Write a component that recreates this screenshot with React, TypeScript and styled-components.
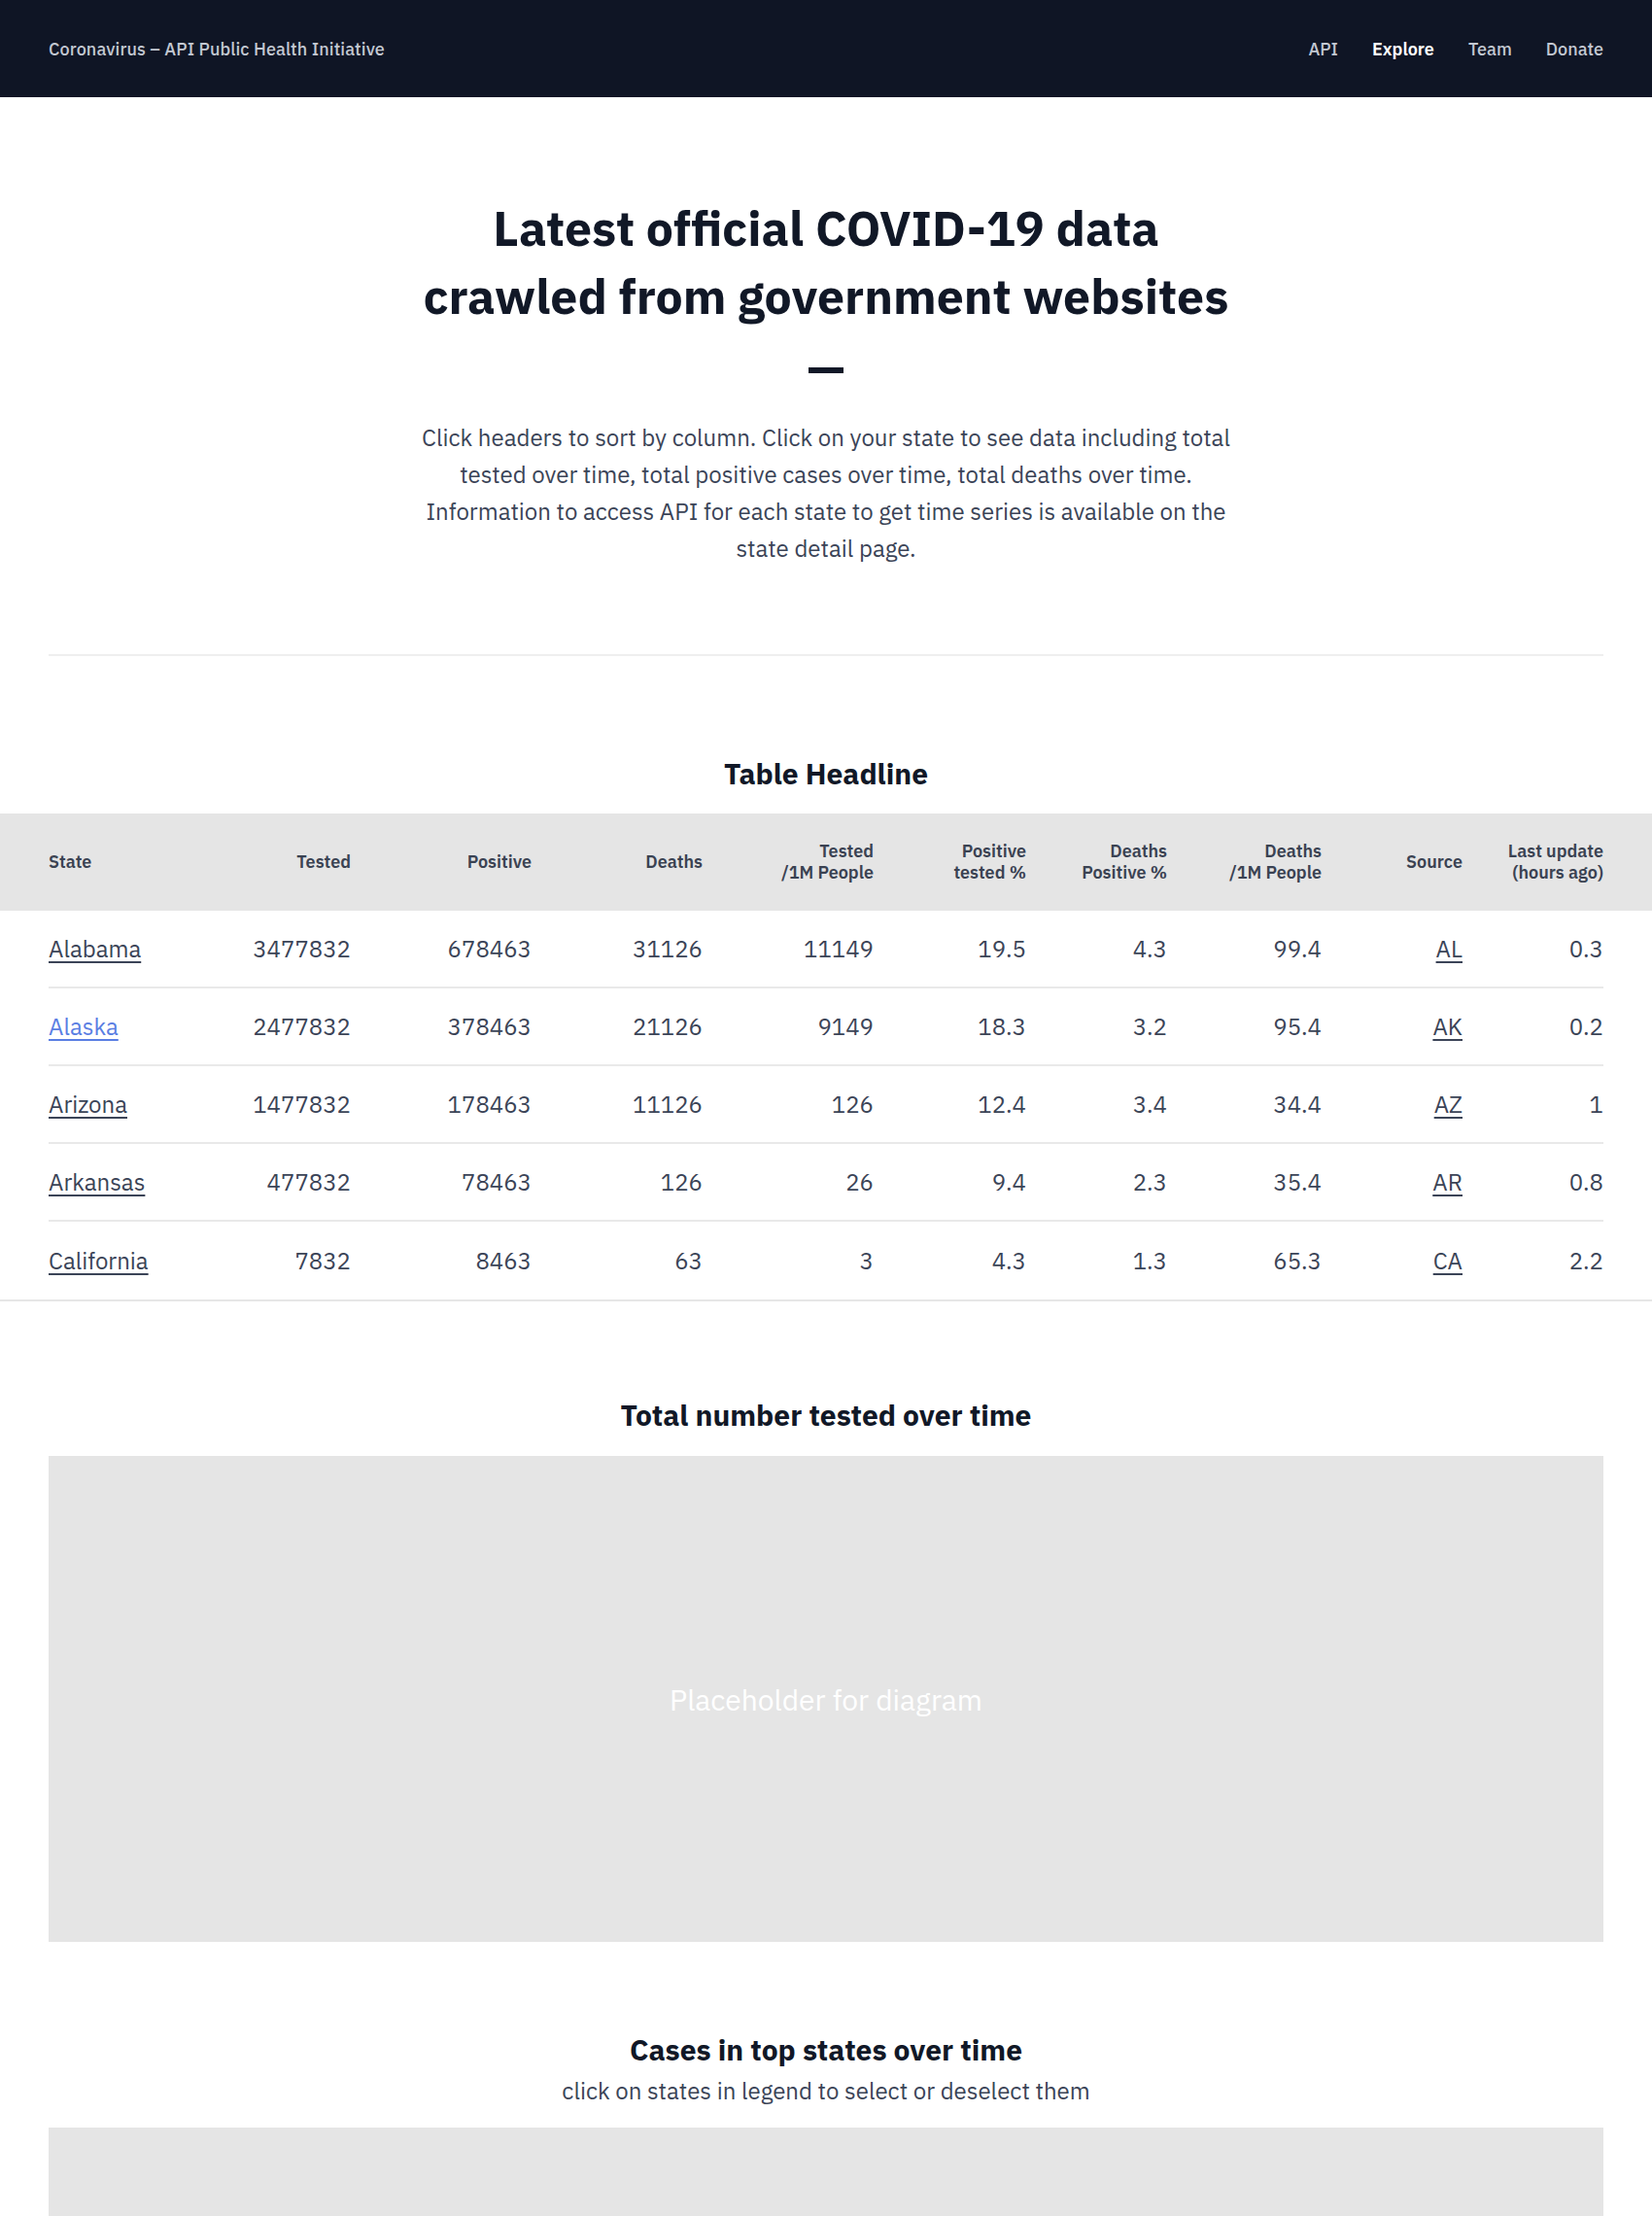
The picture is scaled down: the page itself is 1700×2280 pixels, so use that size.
import React from "react";
import styled, { createGlobalStyle } from "styled-components";

const FONT = `"IBM Plex Sans", Roboto, "Liberation Sans", Arial, sans-serif`;

const GlobalStyle = createGlobalStyle`
  html, body { margin: 0; padding: 0; background: #ffffff; }
  body { font-family: ${FONT}; color: #111827; -webkit-font-smoothing: antialiased; }
  * { box-sizing: border-box; }
`;

const Nav = styled.nav`
  height: 100px;
  background: #0f1525;
  display: flex;
  align-items: center;
  justify-content: space-between;
  padding: 0 50px;
`;

const Brand = styled.a`
  color: #c3c8d2;
  font-size: 18px;
  font-weight: 500;
  letter-spacing: 0.1px;
  text-decoration: none;
`;

const NavLinks = styled.div`
  display: flex;
  gap: 35px;
`;

const NavLink = styled.a<{ $active?: boolean }>`
  color: ${(p) => (p.$active ? "#ffffff" : "#c3c8d2")};
  font-size: 18px;
  font-weight: ${(p) => (p.$active ? 600 : 500)};
  text-decoration: none;
`;

const Hero = styled.header`
  padding: 100px 50px 0;
  display: flex;
  flex-direction: column;
  align-items: center;
  text-align: center;
`;

const Title = styled.h1`
  margin: 0;
  font-size: 50px;
  line-height: 70px;
  font-weight: 700;
  color: #111827;
  max-width: 870px;
`;

const Dash = styled.div`
  width: 36px;
  height: 6px;
  background: #111827;
  margin-top: 38px;
`;

const Lead = styled.p`
  margin: 47px 0 0;
  max-width: 850px;
  font-size: 24px;
  line-height: 38px;
  color: #3b4457;
`;

const Rule = styled.hr`
  margin: 90px 50px 0;
  border: 0;
  border-top: 2px solid #efefef;
`;

const SectionTitle = styled.h2<{ $top: number; $bottom: number }>`
  margin: ${(p) => p.$top}px 0 ${(p) => p.$bottom}px;
  text-align: center;
  font-size: 30px;
  line-height: 36px;
  font-weight: 700;
  color: #111827;
`;

const SubTitle = styled.p`
  margin: -17px 0 19px;
  text-align: center;
  font-size: 24px;
  line-height: 38px;
  color: #3b4457;
`;

const TableWrap = styled.div`
  border-bottom: 2px solid #e6e6e6;
`;

const HeadBand = styled.div`
  background: #e5e5e5;
  padding: 0 50px;
`;

const Row = styled.div`
  display: grid;
  grid-template-columns: 160px 151px 186px 176px 176px 157px 145px 159px 145px 145px;
  align-items: center;
`;

const HeadRow = styled(Row)`
  height: 100px;
`;

const HeadCell = styled.div<{ $left?: boolean }>`
  text-align: ${(p) => (p.$left ? "left" : "right")};
  font-size: 18px;
  line-height: 22px;
  font-weight: 600;
  color: #3a4252;
  white-space: pre-line;
`;

const Body = styled.div`
  padding: 0 50px;
`;

const BodyRow = styled(Row)`
  height: 80px;
  border-bottom: 2px solid #e9e9e9;
  &:last-child { border-bottom: 0; }
`;

const Cell = styled.div<{ $left?: boolean }>`
  text-align: ${(p) => (p.$left ? "left" : "right")};
  font-size: 24px;
  color: #3b4457;
`;

const CellLink = styled.a<{ $visited?: boolean }>`
  color: ${(p) => (p.$visited ? "#5a7ee3" : "#3b4457")};
  text-decoration: underline;
  text-decoration-thickness: 2px;
  text-underline-offset: 4px;
`;

const Placeholder = styled.div<{ $height: number }>`
  margin: 0 50px;
  height: ${(p) => p.$height}px;
  background: #e5e5e5;
  display: flex;
  align-items: center;
  justify-content: center;
  color: #ffffff;
  font-size: 30px;
  font-weight: 400;
`;

const heads = [
  "State",
  "Tested",
  "Positive",
  "Deaths",
  "Tested\n/1M People",
  "Positive\ntested %",
  "Deaths\nPositive %",
  "Deaths\n/1M People",
  "Source",
  "Last update\n(hours ago)",
];

const rows = [
  ["Alabama", "3477832", "678463", "31126", "11149", "19.5", "4.3", "99.4", "AL", "0.3"],
  ["Alaska", "2477832", "378463", "21126", "9149", "18.3", "3.2", "95.4", "AK", "0.2"],
  ["Arizona", "1477832", "178463", "11126", "126", "12.4", "3.4", "34.4", "AZ", "1"],
  ["Arkansas", "477832", "78463", "126", "26", "9.4", "2.3", "35.4", "AR", "0.8"],
  ["California", "7832", "8463", "63", "3", "4.3", "1.3", "65.3", "CA", "2.2"],
];

export default function App() {
  return (
    <>
      <GlobalStyle />
      <Nav>
        <Brand href="#">Coronavirus – API Public Health Initiative</Brand>
        <NavLinks>
          <NavLink href="#">API</NavLink>
          <NavLink href="#" $active>Explore</NavLink>
          <NavLink href="#">Team</NavLink>
          <NavLink href="#">Donate</NavLink>
        </NavLinks>
      </Nav>
      <Hero>
        <Title>Latest official COVID-19 data crawled from government websites</Title>
        <Dash />
        <Lead>
          Click headers to sort by column. Click on your state to see data including total tested over time,
          total positive cases over time, total deaths over time. Information to access API for each state to
          get time series is available on the state detail page.
        </Lead>
      </Hero>
      <Rule />
      <SectionTitle $top={103} $bottom={23}>Table Headline</SectionTitle>
      <TableWrap>
        <HeadBand>
          <HeadRow>
            {heads.map((h, i) => (
              <HeadCell key={h} $left={i === 0}>{h}</HeadCell>
            ))}
          </HeadRow>
        </HeadBand>
        <Body>
          {rows.map((r) => (
            <BodyRow key={r[0]}>
              {r.map((v, i) => (
                <Cell key={i} $left={i === 0}>
                  {i === 0 || i === 8 ? (
                    <CellLink href="#" $visited={r[0] === "Alaska" && i === 0}>{v}</CellLink>
                  ) : (
                    v
                  )}
                </Cell>
              ))}
            </BodyRow>
          ))}
        </Body>
      </TableWrap>
      <SectionTitle $top={99} $bottom={24}>Total number tested over time</SectionTitle>
      <Placeholder $height={500}>Placeholder for diagram</Placeholder>
      <SectionTitle $top={93} $bottom={22}>Cases in top states over time</SectionTitle>
      <SubTitle>click on states in legend to select or deselect them</SubTitle>
      <Placeholder $height={500} />
    </>
  );
}
